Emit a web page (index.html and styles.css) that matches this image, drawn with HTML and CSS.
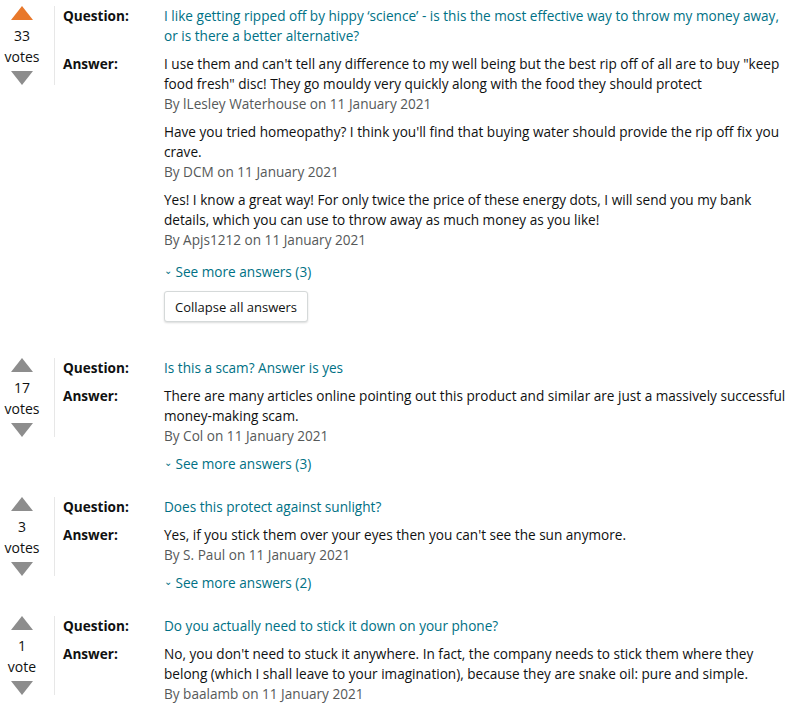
FILE: index.html
```html
<!DOCTYPE html>
<html lang="en">
<head>
  <meta charset="UTF-8">
  <title>Customer questions &amp; answers</title>
  <link rel="stylesheet" href="styles.css">
</head>
<body>
  <div class="qa-list">

    <div class="qa">
      <div class="votes">
        <span class="arrow up voted"></span>
        <span class="count">33</span>
        <span class="unit">votes</span>
        <span class="arrow down"></span>
      </div>
      <div class="body">
        <div class="row">
          <span class="label">Question:</span>
          <a class="question" href="#">I like getting ripped off by hippy ‘science’ - is this the most effective way to throw my money away, or is there a better alternative?</a>
        </div>
        <div class="row">
          <span class="label">Answer:</span>
          <div class="answers expanded">
            <div class="answer">
              <p>I use them and can't tell any difference to my well being but the best rip off of all are to buy "keep food fresh" disc! They go mouldy very quickly along with the food they should protect</p>
              <p class="by">By lLesley Waterhouse on 11 January 2021</p>
            </div>
            <div class="answer">
              <p>Have you tried homeopathy? I think you'll find that buying water should provide the rip off fix you crave.</p>
              <p class="by">By DCM on 11 January 2021</p>
            </div>
            <div class="answer">
              <p>Yes! I know a great way! For only twice the price of these energy dots, I will send you my bank details, which you can use to throw away as much money as you like!</p>
              <p class="by">By Apjs1212 on 11 January 2021</p>
            </div>
            <a class="more" href="#"><span class="chev">&#8964;</span> See more answers (3)</a>
            <button class="collapse">Collapse all answers</button>
          </div>
        </div>
      </div>
    </div>

    <div class="qa">
      <div class="votes">
        <span class="arrow up"></span>
        <span class="count">17</span>
        <span class="unit">votes</span>
        <span class="arrow down"></span>
      </div>
      <div class="body">
        <div class="row">
          <span class="label">Question:</span>
          <a class="question" href="#">Is this a scam? Answer is yes</a>
        </div>
        <div class="row">
          <span class="label">Answer:</span>
          <div class="answers">
            <div class="answer">
              <p>There are many articles online pointing out this product and similar are just a massively successful money-making scam.</p>
              <p class="by">By Col on 11 January 2021</p>
            </div>
            <a class="more" href="#"><span class="chev">&#8964;</span> See more answers (3)</a>
          </div>
        </div>
      </div>
    </div>

    <div class="qa">
      <div class="votes">
        <span class="arrow up"></span>
        <span class="count">3</span>
        <span class="unit">votes</span>
        <span class="arrow down"></span>
      </div>
      <div class="body">
        <div class="row">
          <span class="label">Question:</span>
          <a class="question" href="#">Does this protect against sunlight?</a>
        </div>
        <div class="row">
          <span class="label">Answer:</span>
          <div class="answers">
            <div class="answer">
              <p>Yes, if you stick them over your eyes then you can't see the sun anymore.</p>
              <p class="by">By S. Paul on 11 January 2021</p>
            </div>
            <a class="more" href="#"><span class="chev">&#8964;</span> See more answers (2)</a>
          </div>
        </div>
      </div>
    </div>

    <div class="qa">
      <div class="votes">
        <span class="arrow up"></span>
        <span class="count">1</span>
        <span class="unit">vote</span>
        <span class="arrow down"></span>
      </div>
      <div class="body">
        <div class="row">
          <span class="label">Question:</span>
          <a class="question" href="#">Do you actually need to stick it down on your phone?</a>
        </div>
        <div class="row">
          <span class="label">Answer:</span>
          <div class="answers">
            <div class="answer">
              <p>No, you don't need to stuck it anywhere. In fact, the company needs to stick them where they belong (which I shall leave to your imagination), because they are snake oil: pure and simple.</p>
              <p class="by">By baalamb on 11 January 2021</p>
            </div>
          </div>
        </div>
      </div>
    </div>

  </div>
</body>
</html>
```

FILE: styles.css
```css
body { margin: 0; background: #fff; color: #0f1111; font-family: "Open Sans", Arial, sans-serif; font-size: 13.6px; line-height: 20px; }
.qa-list { padding: 6px 8px 0 0; }
.qa { display: flex; align-items: flex-start; margin-bottom: 14px; }
.votes { width: 44px; padding-right: 10px; border-right: 1px solid #e7e7e7; display: flex; flex-direction: column; align-items: center; font-size: 14px; line-height: 21px; }
.arrow { width: 0; height: 0; border-left: 11px solid transparent; border-right: 11px solid transparent; }
.arrow.up { border-bottom: 14px solid #8d8d8d; margin-bottom: 5px; }
.arrow.up.voted { border-bottom-color: #e8782b; }
.arrow.down { border-top: 14px solid #8d8d8d; margin-top: 4px; }
.body { flex: 1; padding-left: 8px; }
.row { display: flex; margin-bottom: 8px; }
.label { width: 101px; flex: none; font-weight: bold; }
.question { color: #007185; text-decoration: none; }
.answers { flex: 1; }
.answer { margin-bottom: 8px; }
.answer p { margin: 0; }
.answer .by { color: #565959; }
.more { display: inline-block; color: #007185; text-decoration: none; margin-top: -1px; }
.expanded .more { margin-top: 4px; }
.chev { font-size: 10px; position: relative; top: -3px; }
.collapse { display: block; margin: 8px 0 14px; height: 31px; padding: 0 10px; background: #fff; border: 1px solid #d5d9d9; border-radius: 3px; box-shadow: 0 1px 2px rgba(15,17,17,.15); font-family: inherit; font-size: 13px; color: #0f1111; }
```
